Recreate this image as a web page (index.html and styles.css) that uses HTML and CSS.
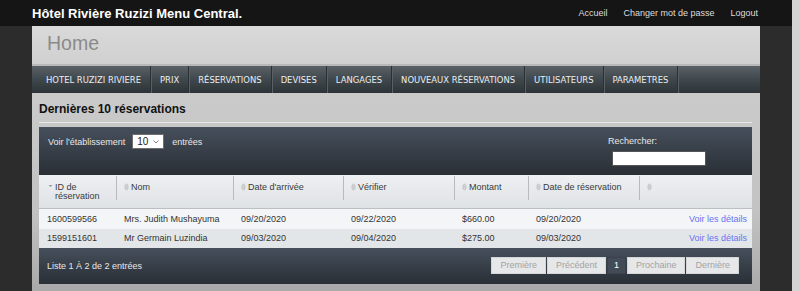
FILE: index.html
```html
<!DOCTYPE html>
<html lang="fr">
	<head>
		<meta charset="utf-8" />
		<title>Hôtel Rivière Ruzizi Menu Central.</title>
		<link rel="stylesheet" href="styles.css">
	</head>
	<body>
		<div class="topbar">
			<div class="wrap topbar-inner">
				<div class="brand">Hôtel Rivière Ruzizi Menu Central.</div>
				<nav class="toplinks">
					<a href="#">Accueil</a>
					<a href="#">Changer mot de passe</a>
					<a href="#">Logout</a>
				</nav>
			</div>
		</div>
		<div class="wrap">
			<header class="head">
				<h1>Home</h1>
			</header>
			<nav class="menu">
				<a href="#">Hotel Ruzizi Riviere</a>
				<a href="#">Prix</a>
				<a href="#">Réservations</a>
				<a href="#">Devises</a>
				<a href="#">Langages</a>
				<a href="#">Nouveaux Réservations</a>
				<a href="#">Utilisateurs</a>
				<a href="#">Parametres</a>
			</nav>
			<section class="content">
				<h2>Dernières 10 réservations</h2>
				<div class="panel">
					<div class="toolbar">
						<div class="length">
							Voir l'établissement
							<span class="select">10
								<svg width="6" height="4" viewBox="0 0 6 4"><path d="M0.5 0.5 L3 3 L5.5 0.5" fill="none" stroke="#777" stroke-width="0.9"/></svg>
							</span>
							entrées
						</div>
						<label class="search">
							Rechercher:
							<span class="search-box"></span>
						</label>
					</div>
					<table class="grid">
						<colgroup>
							<col style="width: 77px" />
							<col style="width: 117px" />
							<col style="width: 110px" />
							<col style="width: 111px" />
							<col style="width: 74px" />
							<col style="width: 111px" />
							<col style="width: 113px" />
						</colgroup>
						<thead>
							<tr>
								<th class="sorted"><svg class="sort" width="5" height="8" viewBox="0 0 5 8"><path d="M0.5 2 H4.5 L2.5 4 Z" fill="#9a9a9a"/></svg><span>ID de réservation</span></th>
								<th><svg class="sort" width="5" height="8" viewBox="0 0 5 8"><path d="M2.5 0.8 L4.3 3.2 H0.7 Z M0.7 4.8 H4.3 L2.5 7.2 Z" fill="none" stroke="#b3b3b3" stroke-width="0.8"/></svg><span>Nom</span></th>
								<th><svg class="sort" width="5" height="8" viewBox="0 0 5 8"><path d="M2.5 0.8 L4.3 3.2 H0.7 Z M0.7 4.8 H4.3 L2.5 7.2 Z" fill="none" stroke="#b3b3b3" stroke-width="0.8"/></svg><span>Date d'arrivée</span></th>
								<th><svg class="sort" width="5" height="8" viewBox="0 0 5 8"><path d="M2.5 0.8 L4.3 3.2 H0.7 Z M0.7 4.8 H4.3 L2.5 7.2 Z" fill="none" stroke="#b3b3b3" stroke-width="0.8"/></svg><span>Vérifier</span></th>
								<th><svg class="sort" width="5" height="8" viewBox="0 0 5 8"><path d="M2.5 0.8 L4.3 3.2 H0.7 Z M0.7 4.8 H4.3 L2.5 7.2 Z" fill="none" stroke="#b3b3b3" stroke-width="0.8"/></svg><span>Montant</span></th>
								<th><svg class="sort" width="5" height="8" viewBox="0 0 5 8"><path d="M2.5 0.8 L4.3 3.2 H0.7 Z M0.7 4.8 H4.3 L2.5 7.2 Z" fill="none" stroke="#b3b3b3" stroke-width="0.8"/></svg><span>Date de réservation</span></th>
								<th><svg class="sort" width="5" height="8" viewBox="0 0 5 8"><path d="M2.5 0.8 L4.3 3.2 H0.7 Z M0.7 4.8 H4.3 L2.5 7.2 Z" fill="none" stroke="#b3b3b3" stroke-width="0.8"/></svg></th>
							</tr>
						</thead>
						<tbody>
							<tr class="odd">
								<td>1600599566</td>
								<td>Mrs. Judith Mushayuma</td>
								<td>09/20/2020</td>
								<td>09/22/2020</td>
								<td>$660.00</td>
								<td>09/20/2020</td>
								<td class="action"><a href="#">Voir les détails</a></td>
							</tr>
							<tr class="even">
								<td>1599151601</td>
								<td>Mr Germain Luzindia</td>
								<td>09/03/2020</td>
								<td>09/04/2020</td>
								<td>$275.00</td>
								<td>09/03/2020</td>
								<td class="action"><a href="#">Voir les détails</a></td>
							</tr>
						</tbody>
					</table>
					<div class="footer">
						<div class="info">Liste 1 À 2 de 2 entrées</div>
						<div class="pager">
							<span>Première</span>
							<span>Précédent</span>
							<span class="current">1</span>
							<span>Prochaine</span>
							<span>Dernière</span>
						</div>
					</div>
				</div>
			</section>
		</div>
	</body>
</html>
```

FILE: styles.css
```css
html {
	background: #d3d3d3;
}

body {
	background: #2c2c2c;
	color: #333333;
	font-family: "Liberation Sans", Arial, sans-serif;
	font-size: 9px;
	margin: 0 8px 0 0;
	min-height: 291px;
}

a {
	text-decoration: none;
}

.wrap {
	margin: 0 auto;
	width: 728px;
}

.topbar {
	background: #151515;
	height: 26px;
}

.topbar-inner {
	align-items: center;
	display: flex;
	height: 26px;
	justify-content: space-between;
}

.brand {
	color: #ffffff;
	font-size: 13px;
	font-weight: bold;
}

.toplinks {
	display: flex;
	gap: 16px;
	padding-right: 2px;
}

.toplinks a {
	color: #dddddd;
}

.head {
	background: linear-gradient(#d9d9d9, #d0d0d0);
	border-bottom: 2px solid #b9b9b9;
	height: 38px;
}

.head h1 {
	color: #8a8a8a;
	font-size: 19.5px;
	font-weight: normal;
	line-height: 1.15;
	margin: 0;
	padding: 6px 0 0 15px;
}

.menu {
	background: linear-gradient(#5b6267, #414a4f 45%, #2d3337);
	box-shadow: 0 1px 0 #8f8f8f;
	display: flex;
	height: 27px;
}

.menu a {
	border-right: 1px solid #2b3034;
	box-shadow: 1px 0 0 #596166;
	color: #eceef0;
	font-family: "DejaVu Sans Condensed", sans-serif;
	font-size: 9.4px;
	line-height: 27px;
	padding: 0 9px;
	text-transform: uppercase;
}

.menu a:first-child {
	padding-left: 14px;
}

.content {
	background: linear-gradient(#cacaca, #c2c2c2 60%, #a9a9a9);
	min-height: 198px;
	padding: 1px 8px 0 7px;
}

.content h2 {
	border-bottom: 1px solid #e6e6e6;
	color: #111111;
	font-size: 12px;
	line-height: 14px;
	margin: 8px 0 0 0;
	padding-bottom: 6px;
}

.panel {
	margin-top: 4px;
}

.toolbar {
	background: linear-gradient(#46505c, #343b44 60%, #2b3037);
	color: #e8e8e8;
	display: flex;
	height: 48px;
	justify-content: space-between;
}

.length {
	align-items: center;
	display: flex;
	height: 15px;
	padding: 7px 0 0 9px;
}

.select {
	align-items: center;
	background: #ffffff;
	border: 1px solid #6f6f6f;
	box-sizing: border-box;
	color: #222222;
	display: flex;
	font-size: 10px;
	height: 15px;
	justify-content: space-between;
	margin: 0 8px 0 7px;
	padding: 0 4px 0 4px;
	width: 32px;
}

.search {
	display: flex;
	flex-direction: column;
	line-height: 11px;
	padding: 9px 46px 0 0;
	width: 98px;
}

.search-box {
	background: #ffffff;
	border: 1px solid #555555;
	box-sizing: border-box;
	height: 15px;
	margin: 4px 0 0 4px;
	width: 94px;
}

.grid {
	border-collapse: collapse;
	table-layout: fixed;
	width: 713px;
}

.grid th {
	background: linear-gradient(#b7bbbf, #b7bbbf) 0 1px / 1px 24px no-repeat,
		linear-gradient(#eef0f2, #dfe2e5);
	border-bottom: 1px solid #bcc0c3;
	box-sizing: border-box;
	color: #3a3a3a;
	font-weight: normal;
	height: 33px;
	line-height: 9px;
	padding: 8px 8px 0 8px;
	text-align: left;
	vertical-align: top;
}

.grid th:first-child {
	background: linear-gradient(#eef0f2, #dfe2e5);
	padding-left: 9px;
}

.grid th span {
	display: inline-block;
	vertical-align: top;
}

.grid th.sorted span {
	width: 52px;
}

.sort {
	margin-right: 2px;
	vertical-align: top;
}

.grid td {
	height: 19px;
	padding: 0 8px;
	white-space: nowrap;
}

.grid .odd td {
	background: #f3f5f6;
	height: 20px;
}

.grid .even td {
	background: #e3e6e8;
}

.grid td.action {
	padding-right: 5px;
	text-align: right;
}

.action a {
	color: #6a72f2;
}

.footer {
	align-items: center;
	background: linear-gradient(#46505c, #343b44 60%, #2b3037);
	color: #e8e8e8;
	display: flex;
	height: 36px;
	justify-content: space-between;
	padding: 0 13px 0 8px;
}

.pager {
	display: flex;
	gap: 1px;
}

.pager span {
	background: #e6e7e8;
	border: 1px solid #d4d5d6;
	color: #a3a3a3;
	height: 15px;
	line-height: 15px;
	padding: 0 8px;
}

.pager .current {
	background: #434b57;
	border-color: #3a414c;
	color: #ffffff;
	padding: 0 6px;
}
```
